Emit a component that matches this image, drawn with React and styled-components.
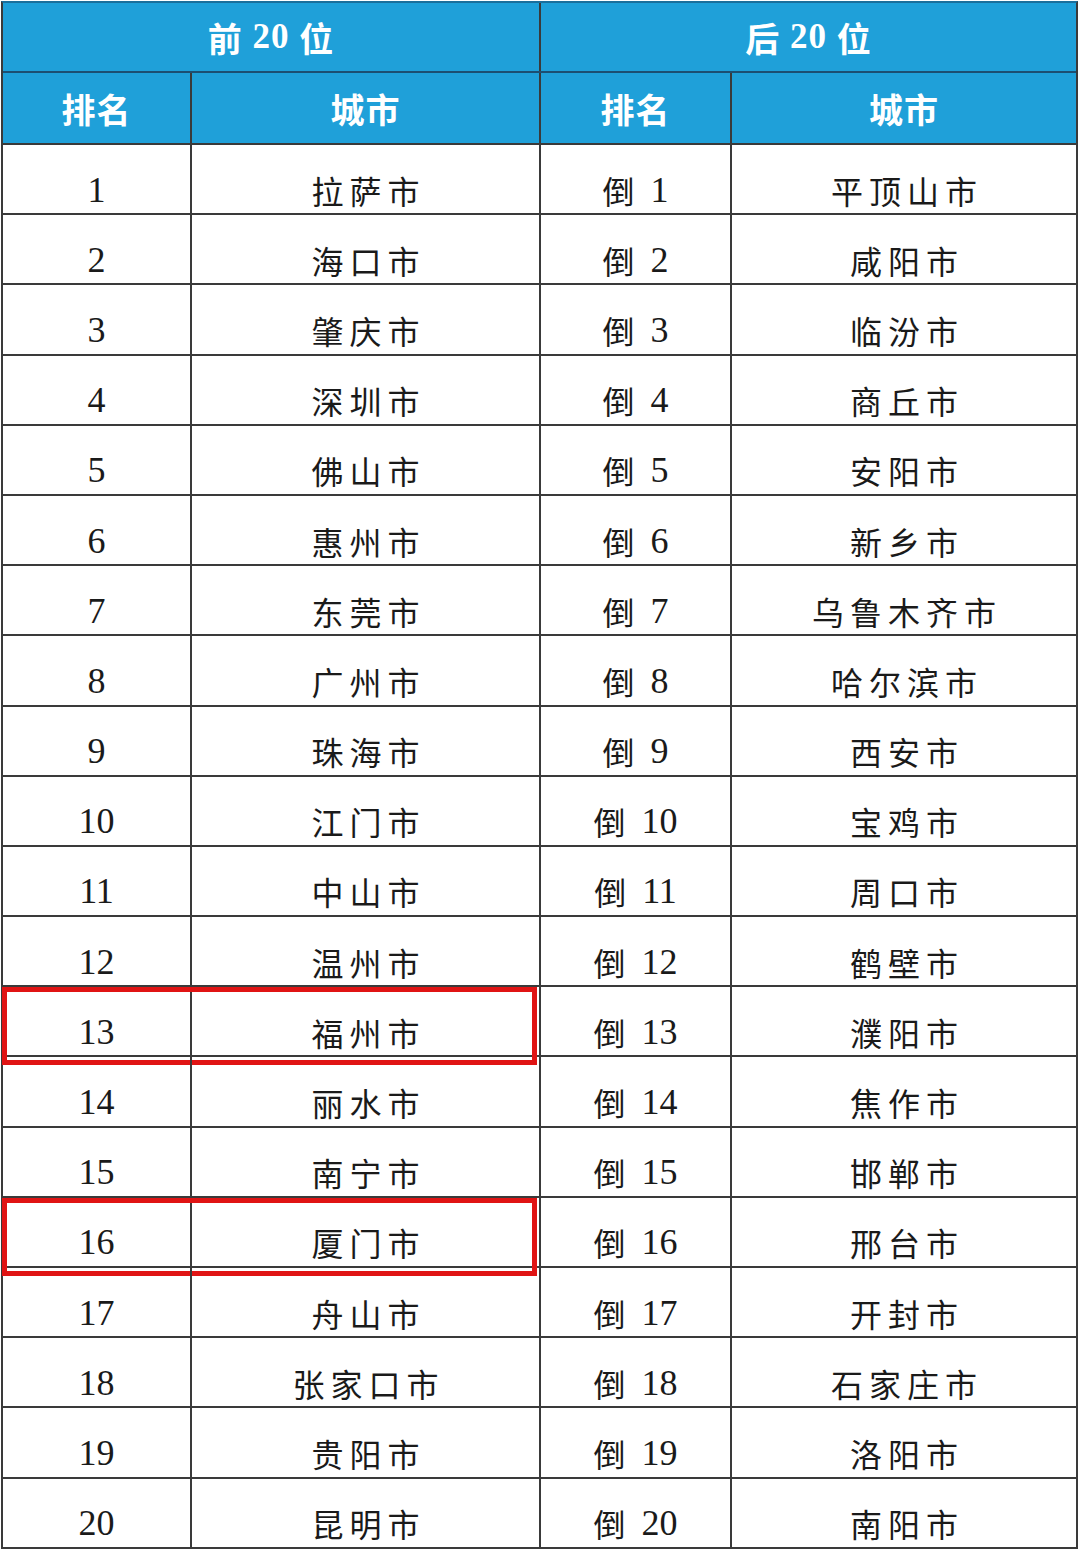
import React from "react";
import styled, { createGlobalStyle } from "styled-components";

const GlobalStyle = createGlobalStyle`
  html, body {
    margin: 0;
    padding: 0;
    background: #ffffff;
  }
  body {
    font-family: "Liberation Serif", "Noto Sans CJK SC", serif;
  }
`;

const COLS = "187px 349px 191px 346px";
const LINE = "#3a3a3a";

const Page = styled.div`
  width: 1080px;
  height: 1552px;
  padding: 1px 0 0 1px;
  box-sizing: border-box;
  overflow: hidden;
`;

const Table = styled.div`
  width: 1077px;
  border: 2px solid ${LINE};
  border-top-color: #1a6f9c;
  border-bottom: none;
  box-sizing: border-box;
  display: flex;
  flex-direction: column;
`;

const HeadRow = styled.div`
  display: grid;
  grid-template-columns: ${(p) => p.$cols};
  height: ${(p) => p.$h}px;
  background: #1fa0d9;
  border-bottom: 2px solid ${(p) => p.$line};
  box-sizing: border-box;
`;

const HeadCell = styled.div`
  display: flex;
  align-items: center;
  justify-content: center;
  color: #ffffff;
  font-family: "Liberation Serif", "Noto Sans CJK SC", serif;
  font-weight: 700;
  font-size: 35px;
  letter-spacing: 1px;
  border-left: ${(p) => (p.$first ? "none" : `2px solid ${LINE}`)};
  & b {
    font-family: "Noto Sans CJK SC", sans-serif;
    font-weight: 700;
    font-size: 34px;
  }
`;

const Row = styled.div`
  position: relative;
  display: grid;
  grid-template-columns: ${COLS};
  height: 70.2px;
  border-bottom: 2px solid ${LINE};
  box-sizing: border-box;
`;

const Cell = styled.div`
  display: flex;
  align-items: center;
  justify-content: center;
  padding-top: 21px;
  color: #1a1a1a;
  font-size: 36px;
  border-left: ${(p) => (p.$first ? "none" : `2px solid ${LINE}`)};
  white-space: pre;
`;

const Han = styled.span`
  font-family: "Noto Sans CJK SC", sans-serif;
  font-size: 32px;
  font-weight: 400;
  letter-spacing: ${(p) => p.$spacing ?? 6}px;
  margin-right: ${(p) => -(p.$spacing ?? 6)}px;
`;

const Num = styled.span`
  font-family: "Liberation Serif", serif;
  font-size: 36px;
  margin-left: ${(p) => (p.$gap ? 16 : 0)}px;
`;

const Highlight = styled.div`
  position: absolute;
  left: -1px;
  top: 0px;
  width: 535px;
  height: 78px;
  border: 5px solid #e01414;
  box-sizing: border-box;
  pointer-events: none;
`;

const top20 = [
  "拉萨市", "海口市", "肇庆市", "深圳市", "佛山市", "惠州市", "东莞市",
  "广州市", "珠海市", "江门市", "中山市", "温州市", "福州市", "丽水市",
  "南宁市", "厦门市", "舟山市", "张家口市", "贵阳市", "昆明市",
];

const bottom20 = [
  "平顶山市", "咸阳市", "临汾市", "商丘市", "安阳市", "新乡市", "乌鲁木齐市",
  "哈尔滨市", "西安市", "宝鸡市", "周口市", "鹤壁市", "濮阳市", "焦作市",
  "邯郸市", "邢台市", "开封市", "石家庄市", "洛阳市", "南阳市",
];

const highlighted = [13, 16];

export default function App() {
  return (
    <Page>
      <GlobalStyle />
      <Table>
        <HeadRow $cols="536px 537px" $h={70} $line="#1c4f72">
          <HeadCell $first>
            <b>前</b>&nbsp;20&nbsp;<b>位</b>
          </HeadCell>
          <HeadCell>
            <b>后</b>&nbsp;20&nbsp;<b>位</b>
          </HeadCell>
        </HeadRow>
        <HeadRow $cols={COLS} $h={72} $line={LINE}>
          <HeadCell $first>
            <b>排名</b>
          </HeadCell>
          <HeadCell>
            <b>城市</b>
          </HeadCell>
          <HeadCell>
            <b>排名</b>
          </HeadCell>
          <HeadCell>
            <b>城市</b>
          </HeadCell>
        </HeadRow>
        {top20.map((city, i) => {
          const rank = i + 1;
          return (
            <Row key={rank}>
              <Cell $first>
                <Num>{rank}</Num>
              </Cell>
              <Cell>
                <Han>{city}</Han>
              </Cell>
              <Cell>
                <Han $spacing={0}>倒</Han>
                <Num $gap>{rank}</Num>
              </Cell>
              <Cell>
                <Han>{bottom20[i]}</Han>
              </Cell>
              {highlighted.includes(rank) && <Highlight />}
            </Row>
          );
        })}
      </Table>
    </Page>
  );
}
